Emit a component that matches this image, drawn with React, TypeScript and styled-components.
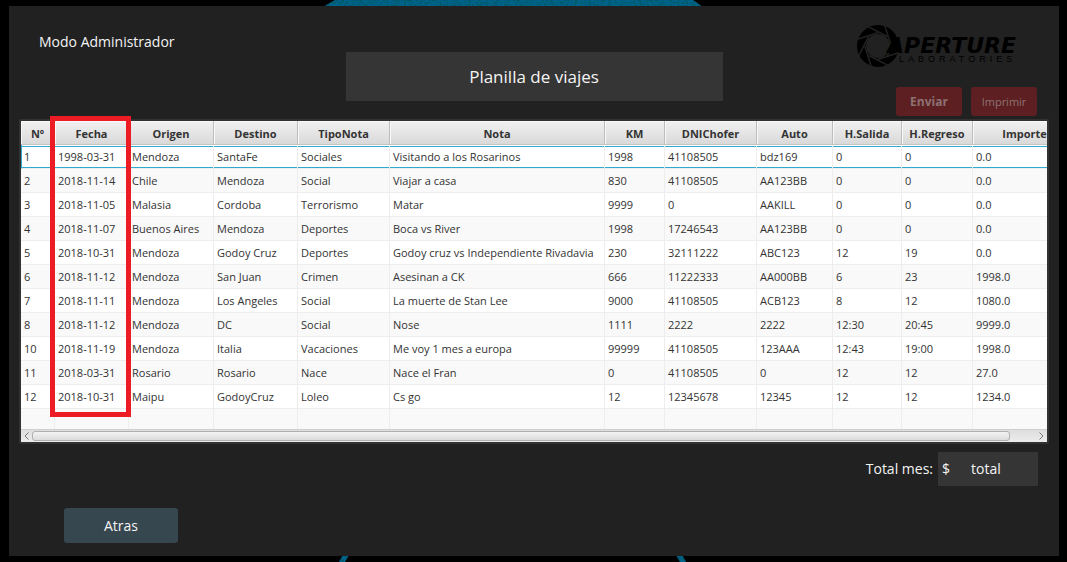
import React from "react";
import styled, { createGlobalStyle, css } from "styled-components";

const GlobalStyle = createGlobalStyle`
  *, *::before, *::after { box-sizing: border-box; }
  body {
    margin: 0;
    background: #000;
    color: #f4f4f4;
    font-family: "Open Sans", "Noto Sans", sans-serif;
  }
`;

const Screen = styled.div`
  position: relative;
  display: flex;
  min-height: 100vh;
  padding: 6px 8px 6px 9px;
`;

const Wallpaper = styled.svg`
  position: absolute;
  inset: 0;
  width: 100%;
  height: 100%;
`;

const Panel = styled.main`
  position: relative;
  flex: 1;
  min-width: 0;
  background: #212121;
`;

const Header = styled.header`
  display: grid;
  grid-template-columns: 1fr 377px 1fr;
  height: 113px;
`;

const Mode = styled.p`
  margin: 26px 0 0 30px;
  font-size: 14px;
  line-height: 20px;
`;

const Title = styled.h1`
  margin: 46px 0 0;
  height: 49px;
  background: #353535;
  font-size: 17px;
  font-weight: 400;
  line-height: 49px;
  text-align: center;
`;

const Brand = styled.div`
  display: flex;
  flex-direction: column;
  align-items: flex-end;
  padding: 18px 22px 0 0;
`;

const Logo = styled.svg`
  display: block;
  width: 184px;
  height: 46px;
`;

const Actions = styled.div`
  display: flex;
  gap: 9px;
  margin-top: 17px;
`;

const ActionButton = styled.button<{ $strong?: boolean }>`
  width: 66px;
  height: 29px;
  padding: 0;
  border: 0;
  border-radius: 3px;
  background: #5d1f21;
  color: #8d7273;
  font-family: inherit;
  font-size: ${(p) => (p.$strong ? 12 : 11)}px;
  font-weight: ${(p) => (p.$strong ? 700 : 400)};
`;

const Frame = styled.section`
  position: relative;
  margin: 0 10px;
  border: 2px solid #323232;
  border-radius: 2px;
`;

const Viewport = styled.div`
  overflow: hidden;
  height: 308px;
  background: #fff;
`;

const Table = styled.table`
  width: 100%;
  min-width: 1056px;
  table-layout: fixed;
  border-collapse: separate;
  border-spacing: 0;
  color: #333;
  font-size: 11px;
  line-height: 16px;
`;

const HeadCell = styled.th`
  height: 24px;
  padding: 2px 0 0;
  border-right: 1px solid #bdbdbd;
  border-bottom: 1px solid #c3c3c3;
  background: linear-gradient(#f1f1f1, #d9d9d9);
  box-shadow: inset 1px 1px 0 #f8f8f8;
  font-weight: 700;
`;

const Cell = styled.td`
  height: 24px;
  padding: 0 0 0 3px;
  border-right: 1px solid #ededed;
  border-bottom: 1px solid #ededed;
  white-space: nowrap;
`;

const focusedRow = css`
  td {
    background: linear-gradient(
      #fff 1px, #2fa9cf 1px, #2fa9cf 2px, #fff 2px, #fff 22px, #2fa9cf 22px, #2fa9cf 23px
    );
  }
  td:first-child {
    border-left: 1px solid #2fa9cf;
    padding-left: 2px;
  }
`;

const Row = styled.tr<{ $focused?: boolean }>`
  &:nth-child(even) { background: #f9f9f9; }
  ${(p) => p.$focused && focusedRow}
`;

const ScrollBar = styled.div`
  display: flex;
  align-items: center;
  height: 13px;
  border-top: 1px solid #cfcfcf;
  background: linear-gradient(#dedede, #ececec);
`;

const ScrollArrow = styled.button`
  display: flex;
  align-items: center;
  justify-content: center;
  width: 11px;
  height: 12px;
  padding: 0;
  border: 0;
  background: none;
`;

const Track = styled.div`
  flex: 1;
  height: 10px;
  padding-right: 26px;
`;

const Thumb = styled.div`
  height: 10px;
  border: 1px solid #b0b0b0;
  border-radius: 3px;
  background: linear-gradient(#f3f3f3, #dcdcdc);
`;

const Highlight = styled.div`
  position: absolute;
  top: -5px;
  left: 29px;
  width: 81px;
  height: 301px;
  border: 5px solid #ed1c24;
  pointer-events: none;
`;

const TotalRow = styled.div`
  display: flex;
  justify-content: flex-end;
  align-items: center;
  gap: 5px;
  padding: 8px 21px 0 0;
  font-size: 14px;
  line-height: 34px;
`;

const TotalBox = styled.output`
  display: flex;
  gap: 21px;
  width: 100px;
  height: 34px;
  padding-left: 4px;
  background: #353535;
`;

const BackButton = styled.button`
  display: block;
  width: 114px;
  height: 35px;
  margin: 22px 0 13px 55px;
  border: 0;
  border-radius: 3px;
  background: #37474f;
  color: #f4f4f4;
  font-family: inherit;
  font-size: 14px;
`;

const columns: [string, number][] = [
  ["Nº", 34],
  ["Fecha", 74],
  ["Origen", 85],
  ["Destino", 84],
  ["TipoNota", 92],
  ["Nota", 215],
  ["KM", 60],
  ["DNIChofer", 92],
  ["Auto", 76],
  ["H.Salida", 69],
  ["H.Regreso", 71],
  ["Importe", 104],
];

const trips: string[][] = [
  ["1", "1998-03-31", "Mendoza", "SantaFe", "Sociales", "Visitando a los Rosarinos", "1998", "41108505", "bdz169", "0", "0", "0.0"],
  ["2", "2018-11-14", "Chile", "Mendoza", "Social", "Viajar a casa", "830", "41108505", "AA123BB", "0", "0", "0.0"],
  ["3", "2018-11-05", "Malasia", "Cordoba", "Terrorismo", "Matar", "9999", "0", "AAKILL", "0", "0", "0.0"],
  ["4", "2018-11-07", "Buenos Aires", "Mendoza", "Deportes", "Boca vs River", "1998", "17246543", "AA123BB", "0", "0", "0.0"],
  ["5", "2018-10-31", "Mendoza", "Godoy Cruz", "Deportes", "Godoy cruz vs Independiente Rivadavia", "230", "32111222", "ABC123", "12", "19", "0.0"],
  ["6", "2018-11-12", "Mendoza", "San Juan", "Crimen", "Asesinan a CK", "666", "11222333", "AA000BB", "6", "23", "1998.0"],
  ["7", "2018-11-11", "Mendoza", "Los Angeles", "Social", "La muerte de Stan Lee", "9000", "41108505", "ACB123", "8", "12", "1080.0"],
  ["8", "2018-11-12", "Mendoza", "DC", "Social", "Nose", "1111", "2222", "2222", "12:30", "20:45", "9999.0"],
  ["10", "2018-11-19", "Mendoza", "Italia", "Vacaciones", "Me voy 1 mes a europa", "99999", "41108505", "123AAA", "12:43", "19:00", "1998.0"],
  ["11", "2018-03-31", "Rosario", "Rosario", "Nace", "Nace el Fran", "0", "41108505", "0", "12", "12", "27.0"],
  ["12", "2018-10-31", "Maipu", "GodoyCruz", "Loleo", "Cs go", "12", "12345678", "12345", "12", "12", "1234.0"],
  ["", "", "", "", "", "", "", "", "", "", "", ""],
];

const blades = [0, 45, 90, 135, 180, 225, 270, 315];

function ApertureLogo() {
  return (
    <Logo viewBox="0 0 184 46" role="img" aria-label="Aperture Laboratories">
      <g transform="translate(25 22)">
        <circle r="16.5" fill="none" stroke="#000" strokeWidth="9" />
        {blades.map((angle) => (
          <path
            key={angle}
            d="M-21 -13.5 L5 -12.5"
            fill="none"
            stroke="#212121"
            strokeWidth="1.5"
            transform={`rotate(${angle - 20})`}
          />
        ))}
      </g>
      <text x="34" y="29" fontFamily="DejaVu Sans, sans-serif" fontWeight="700" fontStyle="italic" fontSize="22">
        APERTURE
      </text>
      <text x="46" y="38" fontFamily="Liberation Sans, sans-serif" fontSize="9" letterSpacing="4">
        LABORATORIES
      </text>
    </Logo>
  );
}

export default function App() {
  return (
    <>
      <GlobalStyle />
      <Screen>
        <Wallpaper viewBox="0 0 1067 562" preserveAspectRatio="none" aria-hidden="true">
          <defs>
            <filter id="grain" x="0" y="0" width="1" height="1">
              <feTurbulence type="fractalNoise" baseFrequency="0.45" numOctaves="2" seed="4" />
              <feColorMatrix values="0 0 0 0 0  0 0 0 0 0.1  0 0 0 0 0.15  6 0 0 0 -2.8" />
              <feComposite in2="SourceGraphic" operator="in" result="specks" />
              <feMerge>
                <feMergeNode in="SourceGraphic" />
                <feMergeNode in="specks" />
              </feMerge>
            </filter>
          </defs>
          <g fill="#06648a" filter="url(#grain)">
            <path d="M335 0 H693 L703 7 H323 Z" />
            <path d="M343 555 H349 L345 562 H339 Z" />
            <path d="M676 555 H682 L686 562 H680 Z" />
          </g>
        </Wallpaper>
        <Panel>
          <Header>
            <Mode>Modo Administrador</Mode>
            <Title>Planilla de viajes</Title>
            <Brand>
              <ApertureLogo />
              <Actions>
                <ActionButton type="button" $strong>Enviar</ActionButton>
                <ActionButton type="button">Imprimir</ActionButton>
              </Actions>
            </Brand>
          </Header>
          <Frame>
            <Viewport>
              <Table>
                <colgroup>
                  {columns.map(([name, width]) => (
                    <col key={name} style={{ width }} />
                  ))}
                </colgroup>
                <thead>
                  <tr>
                    {columns.map(([name]) => (
                      <HeadCell key={name} scope="col">{name}</HeadCell>
                    ))}
                  </tr>
                </thead>
                <tbody>
                  {trips.map((trip, r) => (
                    <Row key={r} $focused={r === 0}>
                      {trip.map((value, c) => (
                        <Cell key={c}>{value}</Cell>
                      ))}
                    </Row>
                  ))}
                </tbody>
              </Table>
            </Viewport>
            <ScrollBar>
              <ScrollArrow type="button" aria-label="Desplazar a la izquierda">
                <svg width="5" height="8" viewBox="0 0 5 8" fill="none" stroke="#777">
                  <path d="M4.500 .5 L1 4 L4.500 7.500" />
                </svg>
              </ScrollArrow>
              <Track>
                <Thumb />
              </Track>
              <ScrollArrow type="button" aria-label="Desplazar a la derecha">
                <svg width="5" height="8" viewBox="0 0 5 8" fill="none" stroke="#777">
                  <path d="M.5 .5 L4 4 L.5 7.500" />
                </svg>
              </ScrollArrow>
            </ScrollBar>
            <Highlight />
          </Frame>
          <TotalRow>
            <label htmlFor="total">Total mes:</label>
            <TotalBox id="total">
              <span>$</span>
              <span>total</span>
            </TotalBox>
          </TotalRow>
          <BackButton type="button">Atras</BackButton>
        </Panel>
      </Screen>
    </>
  );
}
